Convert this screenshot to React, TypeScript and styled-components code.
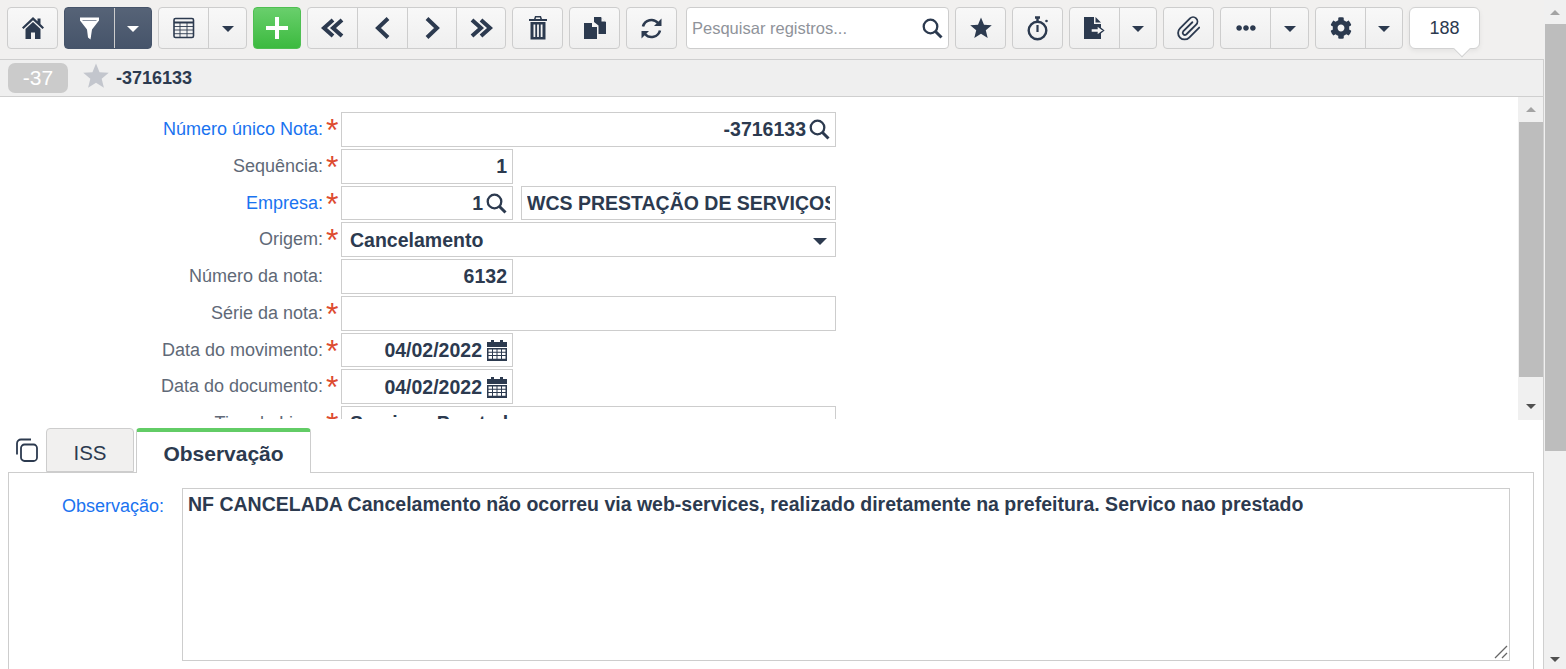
import React from "react";
import styled, { createGlobalStyle } from "styled-components";
import { FaCog, FaEllipsisH } from "react-icons/fa";

const Global = createGlobalStyle`
  html, body { margin: 0; padding: 0; height: 100%; overflow: hidden; background: #fff; }
  #root { height: 100%; }
  * { box-sizing: border-box; }
  body { font-family: "Liberation Sans", Arial, sans-serif; color: #2c3a4f; }
`;

const Page = styled.div`display: flex; height: 669px; width: 1566px; overflow: hidden;`;
const Main = styled.div`width: 1544px; display: flex; flex-direction: column; flex: none;`;

const Toolbar = styled.div`
  height: 59px; flex: none; background: #f1f0ef; padding: 7px 0 0 7px;
  display: flex; gap: 6px; align-items: flex-start;
`;
const Group = styled.div<{ $dark?: boolean }>`
  display: flex; height: 42px; border-radius: 4px; flex: none; overflow: hidden;
  border: 1px solid ${p => (p.$dark ? "#46546a" : "#cdcdcd")};
  background: ${p => (p.$dark ? "linear-gradient(#566377,#46546a)" : "linear-gradient(#f8f8f8,#efefef)")};
`;
const Seg = styled.div<{ $w: number; $dark?: boolean }>`
  width: ${p => p.$w}px; flex: none; display: flex; align-items: center; justify-content: center;
  color: ${p => (p.$dark ? "#fff" : "#2c3a4f")};
  & + & { border-left: 1px solid ${p => (p.$dark ? "#5f6b7e" : "#cdcdcd")}; }
`;
const Caret = styled.span<{ $light?: boolean }>`
  width: 0; height: 0; border-left: 6px solid transparent; border-right: 6px solid transparent;
  border-top: 6px solid ${p => (p.$light ? "#fff" : "#2c3a4f")}; margin-top: 2px;
`;
const AddButton = styled.div`
  width: 48px; height: 42px; flex: none; border-radius: 4px; display: flex; align-items: center; justify-content: center;
  background: linear-gradient(#69cf6c,#3cba3f); border: 1px solid #4fbf52; color: #fff;
`;
const Search = styled.div`
  width: 263px; height: 42px; flex: none; margin-left: 3px; background: #fff; border: 1px solid #cdcdcd; border-radius: 4px;
  display: flex; align-items: center; justify-content: space-between; padding: 0 5px 0 5px;
`;
const Placeholder = styled.span`font-size: 16.5px; color: #8f939a; padding-top: 1px;`;
const CountWrap = styled.div`position: relative; flex: none;`;
const Count = styled.div`
  width: 71px; height: 42px; background: #fff; border: 1px solid #d2d2d2; border-radius: 6px;
  display: flex; align-items: center; justify-content: center; font-size: 18px; color: #2c3a4f;
  box-shadow: 0 2px 5px rgba(0,0,0,.06);
`;
const CountTip = styled.span`
  position: absolute; left: 47px; top: 36px; width: 12px; height: 12px; background: #fff;
  border-right: 1px solid #d2d2d2; border-bottom: 1px solid #d2d2d2; transform: rotate(45deg);
`;

const Header = styled.div`
  height: 38px; flex: none; background: #efefef; border-top: 1px solid #cfcfcf; border-bottom: 1px solid #cfcfcf; border-right: 1px solid #cfcfcf;
  display: flex; align-items: center; padding-left: 8px;
`;
const Badge = styled.div`
  width: 60px; height: 30px; background: #cbcbcb; border-radius: 7px; color: #fff; font-size: 21px;
  display: flex; align-items: center; justify-content: center;
`;
const HeaderStar = styled.span`margin-left: 15px; color: #c3c6cd; display: flex; margin-top: -4px;`;
const HeaderTitle = styled.span`margin-left: 7px; font-size: 18px; font-weight: 700; color: #2c3a4f; padding-top: 1px;`;

const FormArea = styled.div`height: 323px; flex: none; display: flex; overflow: hidden; border-right: 1px solid #cfcfcf;`;
const Form = styled.div`flex: 1; height: 322px; padding-top: 15px; overflow: hidden; min-width: 0;`;
const Row = styled.div`
  display: grid; grid-template-columns: 323px 18px 172px 8px 315px; height: 36.75px; align-items: start;
`;
const Label = styled.div<{ $link?: boolean }>`
  text-align: right; font-size: 18px; line-height: 35px; color: ${p => (p.$link ? "#1a73f0" : "#606977")};
`;
const Req = styled.span`
  color: #dd4b30; font-size: 32px; line-height: 36px; font-weight: 400; padding-left: 3px;
`;
const Field = styled.div<{ $wide?: boolean; $left?: boolean }>`
  ${p => (p.$wide ? "grid-column: 3 / span 3;" : "")}
  height: 34.75px; border: 1px solid #cdcdcd; background: #fff; display: flex; align-items: center; gap: 3px;
  justify-content: ${p => (p.$left ? "flex-start" : "flex-end")};
  padding: 1px 5px 0; font-size: 19.5px; font-weight: 700; color: #2c3a4f; white-space: nowrap; overflow: hidden;
`;
const SecondField = styled(Field)`grid-column: 5;`;
const Clipped = styled.span`display: block; overflow: hidden; flex: 1; min-width: 0;`;
const SelectField = styled(Field)`justify-content: space-between; padding: 1px 8px 0;`;
const SelectCaret = styled(Caret)`margin-top: 2px; border-left-width: 7px; border-right-width: 7px; border-top-width: 7px;`;
const CalendarSvg = styled.svg`margin-left: 2px; flex: none;`;

const ScrollTrack = styled.div<{ $w: number }>`
  width: ${p => p.$w}px; flex: none; background: #f0f0f0; display: flex; flex-direction: column; align-items: stretch;
`;
const ScrollArrow = styled.div<{ $h: number; $down?: boolean }>`
  height: ${p => p.$h}px; flex: none; display: flex; align-items: center; justify-content: center;
  &::before { content: ""; width: 0; height: 0; border-left: 5px solid transparent; border-right: 5px solid transparent;
    ${p => (p.$down ? "border-top: 5px solid #505050;" : "border-bottom: 5px solid #a3a3a3;")} }
`;
const ScrollThumb = styled.div<{ $h: number }>`height: ${p => p.$h}px; flex: none; background: #bdbdbd; margin: 0 0 0 1px;`;
const ScrollSpace = styled.div`flex: 1;`;

const Lower = styled.div`flex: 1; min-height: 0; display: flex; flex-direction: column; background: #fff; border-right: 1px solid #cfcfcf;`;
const TabBar = styled.div`height: 53px; flex: none; padding: 8px 0 0 15px; display: flex; align-items: flex-start;`;
const CopyIcon = styled.span`width: 31px; height: 45px; flex: none; padding-top: 10px; display: flex; color: #2c3a4f;`;
const Tab = styled.div<{ $active?: boolean }>`
  height: ${p => (p.$active ? 45 : 44)}px; flex: none; display: flex; align-items: center; justify-content: center; position: relative; z-index: 1;
  border: 1px solid #cdcdcd; border-radius: 4px 4px 0 0; font-size: ${p => (p.$active ? 21 : 20.5)}px;
  padding-top: ${p => (p.$active ? 2 : 5)}px;
  width: ${p => (p.$active ? 175 : 88)}px; margin-right: ${p => (p.$active ? 0 : 2)}px;
  background: ${p => (p.$active ? "#fff" : "#f1f0ef")};
  font-weight: ${p => (p.$active ? 700 : 400)};
  border-top: ${p => (p.$active ? "4px solid #62cc66" : "1px solid #cdcdcd")};
  border-bottom: ${p => (p.$active ? "none" : "1px solid #cdcdcd")};
  color: #2c3a4f;
`;
const TabPanel = styled.div`
  flex: 1; margin: -1px 9px 0 8px; border: 1px solid #cdcdcd; border-bottom: none; padding: 15px 23px 0 0;
  display: flex; align-items: flex-start;
`;
const ObsLabel = styled.div`width: 155px; flex: none; text-align: right; font-size: 18px; color: #1a73f0; line-height: 36px;`;
const TextArea = styled.div`
  margin-left: 18px; flex: 1; height: 173px; border: 1px solid #cdcdcd; padding: 5px; position: relative;
  font-size: 19.5px; font-weight: 700; color: #2c3a4f; line-height: 21px;
`;
const Grip = styled.svg`position: absolute; right: 1px; bottom: 1px;`;

const IconSvg = ({ children, w = 24, h = 24, vb = "0 0 24 24" }: { children: React.ReactNode; w?: number; h?: number; vb?: string }) => (
  <svg width={w} height={h} viewBox={vb} fill="currentColor">{children}</svg>
);
const HomeIcon = () => (
  <IconSvg w={22} h={22} vb="0 0 22 22"><path d="M11 0l4.500 4.200V1.500h3v5.500L22 10.500l-1.500 1.500L11 3.200 1.500 12 0 10.500z" /><path d="M3.500 12L11 5l7.500 7v10H13v-6.500H9V22H3.500z" /></IconSvg>
);
const Funnel = () => (
  <IconSvg w={19} h={23} vb="0 0 19 23"><path d="M0 .5h19v3L12 12.500 10.500 22.500 8 20.500 7 12.500 0 3.500z" /><path d="M2.500 3.500h14" stroke="#6a7588" strokeWidth=".8" /></IconSvg>
);
const PlusIcon = () => <IconSvg w={22} h={22} vb="0 0 22 22"><path d="M9 0h4v9h9v4h-9v9H9v-9H0V9h9z" /></IconSvg>;
const Chevrons = ({ dir, double }: { dir: "l" | "r"; double?: boolean }) => {
  const flip = dir === "r" ? "scale(-1,1) translate(-26,0)" : undefined;
  return (
    <svg width={double ? 24 : 18} height="24" viewBox={double ? "1 0 24 24" : "4 0 18 24"} fill="none" stroke="currentColor" strokeWidth="4">
      <g transform={flip}>
        {double ? <path d="M13 4L4 12l9 8M22 4l-9 8 9 8" /> : <path d="M18 2.500L8 12l10 9.500" />}
      </g>
    </svg>
  );
};
const TableIcon = () => (
  <IconSvg w={22} h={22} vb="0 0 22 22"><g fill="none" stroke="currentColor">
    <rect x="1" y="1.500" width="19.500" height="19" rx="1.500" strokeWidth="1.600" />
    <path d="M1 5.500h19.500" strokeWidth="2" />
    <path d="M1 9.500h19.500M1 13h19.500M1 16.700h19.500M7 5.500v15M14 5.500v15" strokeWidth=".9" /></g></IconSvg>
);
const Trash = () => (
  <IconSvg w={18} h={24} vb="0 0 18 24"><path fillRule="evenodd" d="M6 0h6l1 3h5v2H0V3h5zM7 1.500 6.700 3h4.600L11 1.500zM1.500 6h15v17.500h-15zM4.500 8.500v12.500h1.800V8.500zM8.100 8.500v12.500h1.800V8.500zM11.700 8.500v12.500h1.800V8.500z" /></IconSvg>
);
const CopyDocs = () => (
  <IconSvg w={22} h={22} vb="0 0 22 22"><path d="M0 6h8v4h5v12H0z" /><path d="M10 0h7l5 5v12h-7.500V8.500L10 5z" /><path d="M17.500 0v4.500H22z" fill="#f5f5f5" /></IconSvg>
);
const SyncIcon = () => (
  <svg width="23" height="23" viewBox="0 0 23 23" fill="none" stroke="currentColor" strokeWidth="2.600">
    <path d="M3 9.500A8.700 8.700 0 0 1 18 6" />
    <path d="M20 13.500A8.700 8.700 0 0 1 5 17" />
    <path d="M21.500 1.500v7.500h-7.500z" fill="currentColor" stroke="none" />
    <path d="M1.500 21.500V14H9z" fill="currentColor" stroke="none" />
  </svg>
);
const StarIcon = ({ s = 22 }: { s?: number }) => (
  <IconSvg w={s} h={s} vb="0 0 22 22"><path d="M11 .5l3 7.300 7.800.5-6 5 1.900 7.700L11 16.800 4.300 21l1.900-7.700-6-5 7.800-.5z" /></IconSvg>
);
const SearchIcon = ({ s = 21 }: { s?: number }) => (
  <svg width={s} height={s} viewBox="0 0 21 21" fill="none" stroke="currentColor"><circle cx="8.500" cy="8.500" r="6.800" strokeWidth="2.300" /><path d="M13.500 13.500l6 6" strokeWidth="3" /></svg>
);
const Stopwatch = () => (
  <svg width="22" height="25" viewBox="0 0 22 25" fill="none" stroke="currentColor"><circle cx="10.500" cy="14.500" r="8.800" strokeWidth="2.400" /><path d="M8 1.500h5M10.500 2v3" strokeWidth="2.400" /><circle cx="19.500" cy="5" r="1.300" fill="currentColor" stroke="none" /><path d="M10.500 9v7" strokeWidth="2.200" /></svg>
);
const ExportIcon = () => (
  <IconSvg w={21} h={22} vb="0 0 21 22">
    <path d="M0 0h10v7h7v15H0z" />
    <path d="M11.500 0l5.500 5.500h-5.500z" />
    <path d="M7 11.500h6V8.500l6.500 5-6.500 5v-3H7z" fill="#f6f6f6" stroke="currentColor" strokeWidth="1.400" />
  </IconSvg>
);
const Clip = () => (
  <svg width="26" height="26" viewBox="0 0 24 24" fill="none" stroke="currentColor" strokeWidth="1.700" strokeLinecap="round" strokeLinejoin="round"><path d="M21.400 11.600l-9.200 9.200a6 6 0 0 1-8.500-8.500l9.200-9.200a4 4 0 0 1 5.700 5.700l-9.200 9.200a2 2 0 0 1-2.800-2.800l8.500-8.500" /></svg>
);
const CopyTab = () => (
  <svg width="23" height="24" viewBox="0 0 23 24" fill="none" stroke="currentColor" strokeWidth="1.800"><rect x="6" y="6.500" width="16" height="16.500" rx="3.500" /><path d="M2 16.500V5.500A4 4 0 0 1 6 1.500h10" /></svg>
);
const CalendarIcon = () => (
  <CalendarSvg width="20" height="21" viewBox="0 0 20 21" fill="currentColor">
    <path d="M4 0h3v2h6V0h3v2h4v5H0V2h4z" />
    <path fillRule="evenodd" d="M0 8h20v13H0zM1.500 9.500v2.200h3.500V9.500zM6 9.500v2.200h3.500V9.500zM10.500 9.500v2.200H14V9.500zM15 9.500v2.200h3.500V9.500zM1.500 12.700v2.200h3.500v-2.200zM6 12.700v2.200h3.500v-2.200zM10.500 12.700v2.200H14v-2.200zM15 12.700v2.200h3.500v-2.200zM1.500 15.900v2.900h3.500v-2.900zM6 15.900v2.900h3.500v-2.900zM10.500 15.900v2.900H14v-2.900zM15 15.900v2.900h3.500v-2.900z" />
  </CalendarSvg>
);

export default function App() {
  return (
    <Page>
      <Global />
      <Main>
        <Toolbar>
          <Group><Seg $w={49}><HomeIcon /></Seg></Group>
          <Group $dark><Seg $w={49} $dark><Funnel /></Seg><Seg $w={37} $dark><Caret $light /></Seg></Group>
          <Group><Seg $w={49}><TableIcon /></Seg><Seg $w={38}><Caret /></Seg></Group>
          <AddButton><PlusIcon /></AddButton>
          <Group>
            <Seg $w={49}><Chevrons dir="l" double /></Seg>
            <Seg $w={50}><Chevrons dir="l" /></Seg>
            <Seg $w={49}><Chevrons dir="r" /></Seg>
            <Seg $w={49}><Chevrons dir="r" double /></Seg>
          </Group>
          <Group><Seg $w={49}><Trash /></Seg></Group>
          <Group><Seg $w={49}><CopyDocs /></Seg></Group>
          <Group><Seg $w={49}><SyncIcon /></Seg></Group>
          <Search><Placeholder>Pesquisar registros...</Placeholder><SearchIcon /></Search>
          <Group><Seg $w={49}><StarIcon /></Seg></Group>
          <Group><Seg $w={49}><Stopwatch /></Seg></Group>
          <Group><Seg $w={49}><ExportIcon /></Seg><Seg $w={37}><Caret /></Seg></Group>
          <Group><Seg $w={49}><Clip /></Seg></Group>
          <Group><Seg $w={49}><FaEllipsisH size={20} /></Seg><Seg $w={38}><Caret /></Seg></Group>
          <Group><Seg $w={49}><FaCog size={22} /></Seg><Seg $w={37}><Caret /></Seg></Group>
          <CountWrap><Count>188</Count><CountTip /></CountWrap>
        </Toolbar>
        <Header>
          <Badge>-37</Badge>
          <HeaderStar><StarIcon s={26} /></HeaderStar>
          <HeaderTitle>-3716133</HeaderTitle>
        </Header>
        <FormArea>
          <Form>
            <Row><Label $link>Número único Nota:</Label><Req>*</Req><Field $wide>-3716133<SearchIcon /></Field></Row>
            <Row><Label>Sequência:</Label><Req>*</Req><Field>1</Field></Row>
            <Row><Label $link>Empresa:</Label><Req>*</Req><Field>1<SearchIcon /></Field><SecondField $left><Clipped>WCS PRESTAÇÃO DE SERVIÇOS</Clipped></SecondField></Row>
            <Row><Label>Origem:</Label><Req>*</Req><SelectField $wide $left>Cancelamento<SelectCaret /></SelectField></Row>
            <Row><Label>Número da nota:</Label><span /><Field>6132</Field></Row>
            <Row><Label>Série da nota:</Label><Req>*</Req><Field $wide /></Row>
            <Row><Label>Data do movimento:</Label><Req>*</Req><Field>04/02/2022<CalendarIcon /></Field></Row>
            <Row><Label>Data do documento:</Label><Req>*</Req><Field>04/02/2022<CalendarIcon /></Field></Row>
            <Row><Label>Tipo de Livro:</Label><Req>*</Req><SelectField $wide $left>Serviços Prestados<SelectCaret /></SelectField></Row>
          </Form>
          <ScrollTrack $w={25}>
            <ScrollArrow $h={25} />
            <ScrollThumb $h={255} />
            <ScrollSpace />
            <ScrollArrow $h={27} $down />
          </ScrollTrack>
        </FormArea>
        <Lower>
          <TabBar>
            <CopyIcon><CopyTab /></CopyIcon>
            <Tab>ISS</Tab>
            <Tab $active>Observação</Tab>
          </TabBar>
          <TabPanel>
            <ObsLabel>Observação:</ObsLabel>
            <TextArea>
              NF CANCELADA Cancelamento não ocorreu via web-services, realizado diretamente na prefeitura. Servico nao prestado
              <Grip width="14" height="14" viewBox="0 0 14 14" fill="none" stroke="#666" strokeWidth="1.300"><path d="M1 13L13 1M8 13l5-5" /></Grip>
            </TextArea>
          </TabPanel>
        </Lower>
      </Main>
      <ScrollTrack $w={22}>
        <ScrollArrow $h={24} />
        <ScrollThumb $h={427} />
        <ScrollSpace />
        <ScrollArrow $h={20} $down />
      </ScrollTrack>
    </Page>
  );
}
